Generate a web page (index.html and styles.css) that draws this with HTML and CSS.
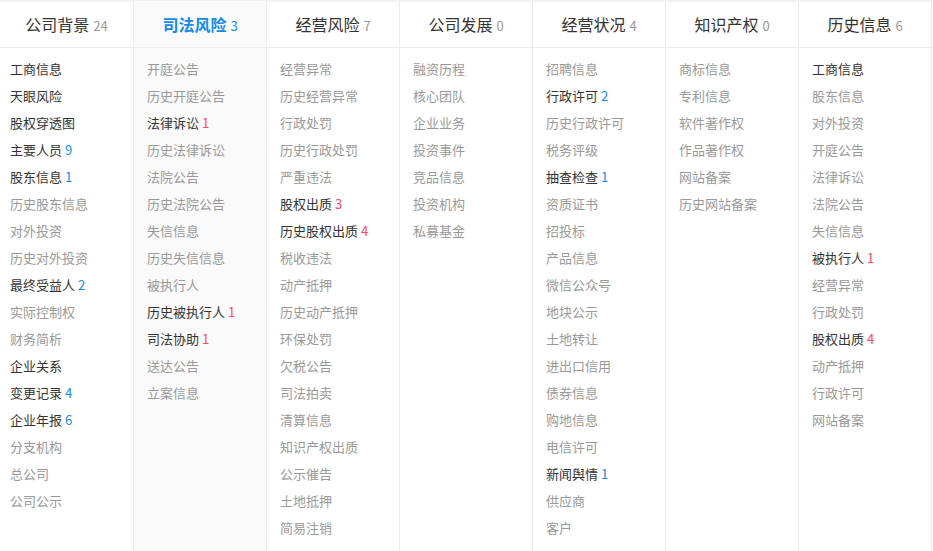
FILE: index.html
```html
<!DOCTYPE html>
<html lang="zh-CN">
<head>
    <meta charset="UTF-8">
    <meta name="viewport" content="width=device-width, initial-scale=1.0">
    <title>企业信息导航</title>
    <link rel="stylesheet" href="styles.css">
</head>
<body>
    <div class="nav-panel">
        <div class="nav-col">
            <div class="nav-head">公司背景<span class="count">24</span></div>
            <ul class="nav-list">
                <li class="on">工商信息</li>
                <li class="on">天眼风险</li>
                <li class="on">股权穿透图</li>
                <li class="on">主要人员<span class="num">9</span></li>
                <li class="on">股东信息<span class="num">1</span></li>
                <li>历史股东信息</li>
                <li>对外投资</li>
                <li>历史对外投资</li>
                <li class="on">最终受益人<span class="num">2</span></li>
                <li>实际控制权</li>
                <li>财务简析</li>
                <li class="on">企业关系</li>
                <li class="on">变更记录<span class="num">4</span></li>
                <li class="on">企业年报<span class="num">6</span></li>
                <li>分支机构</li>
                <li>总公司</li>
                <li>公司公示</li>
            </ul>
        </div>
        <div class="nav-col active">
            <div class="nav-head">司法风险<span class="count">3</span></div>
            <ul class="nav-list">
                <li>开庭公告</li>
                <li>历史开庭公告</li>
                <li class="on">法律诉讼<span class="num risk">1</span></li>
                <li>历史法律诉讼</li>
                <li>法院公告</li>
                <li>历史法院公告</li>
                <li>失信信息</li>
                <li>历史失信信息</li>
                <li>被执行人</li>
                <li class="on">历史被执行人<span class="num risk">1</span></li>
                <li class="on">司法协助<span class="num risk">1</span></li>
                <li>送达公告</li>
                <li>立案信息</li>
            </ul>
        </div>
        <div class="nav-col">
            <div class="nav-head">经营风险<span class="count">7</span></div>
            <ul class="nav-list">
                <li>经营异常</li>
                <li>历史经营异常</li>
                <li>行政处罚</li>
                <li>历史行政处罚</li>
                <li>严重违法</li>
                <li class="on">股权出质<span class="num risk">3</span></li>
                <li class="on">历史股权出质<span class="num risk">4</span></li>
                <li>税收违法</li>
                <li>动产抵押</li>
                <li>历史动产抵押</li>
                <li>环保处罚</li>
                <li>欠税公告</li>
                <li>司法拍卖</li>
                <li>清算信息</li>
                <li>知识产权出质</li>
                <li>公示催告</li>
                <li>土地抵押</li>
                <li>简易注销</li>
            </ul>
        </div>
        <div class="nav-col">
            <div class="nav-head">公司发展<span class="count">0</span></div>
            <ul class="nav-list">
                <li>融资历程</li>
                <li>核心团队</li>
                <li>企业业务</li>
                <li>投资事件</li>
                <li>竞品信息</li>
                <li>投资机构</li>
                <li>私募基金</li>
            </ul>
        </div>
        <div class="nav-col">
            <div class="nav-head">经营状况<span class="count">4</span></div>
            <ul class="nav-list">
                <li>招聘信息</li>
                <li class="on">行政许可<span class="num">2</span></li>
                <li>历史行政许可</li>
                <li>税务评级</li>
                <li class="on">抽查检查<span class="num">1</span></li>
                <li>资质证书</li>
                <li>招投标</li>
                <li>产品信息</li>
                <li>微信公众号</li>
                <li>地块公示</li>
                <li>土地转让</li>
                <li>进出口信用</li>
                <li>债券信息</li>
                <li>购地信息</li>
                <li>电信许可</li>
                <li class="on">新闻舆情<span class="num">1</span></li>
                <li>供应商</li>
                <li>客户</li>
            </ul>
        </div>
        <div class="nav-col">
            <div class="nav-head">知识产权<span class="count">0</span></div>
            <ul class="nav-list">
                <li>商标信息</li>
                <li>专利信息</li>
                <li>软件著作权</li>
                <li>作品著作权</li>
                <li>网站备案</li>
                <li>历史网站备案</li>
            </ul>
        </div>
        <div class="nav-col">
            <div class="nav-head">历史信息<span class="count">6</span></div>
            <ul class="nav-list">
                <li class="on">工商信息</li>
                <li>股东信息</li>
                <li>对外投资</li>
                <li>开庭公告</li>
                <li>法律诉讼</li>
                <li>法院公告</li>
                <li>失信信息</li>
                <li class="on">被执行人<span class="num risk">1</span></li>
                <li>经营异常</li>
                <li>行政处罚</li>
                <li class="on">股权出质<span class="num risk">4</span></li>
                <li>动产抵押</li>
                <li>行政许可</li>
                <li>网站备案</li>
            </ul>
        </div>
    </div>
</body>
</html>
```
FILE: styles.css
```css
* {
    padding: 0;
    margin: 0;
    box-sizing: border-box;
}

body {
    font-family: "Noto Sans CJK SC", "Noto Sans", sans-serif;
    background: #fff;
    color: #333;
}

.nav-panel {
    display: flex;
    height: 551px;
    border-top: 1px solid #f0f0f0;
    box-shadow: inset 0 3px 3px -2px rgba(0, 0, 0, .06);
}

.nav-col {
    width: 133px;
    border-left: 1px solid #ececec;
}

.nav-col:first-child {
    border-left: none;
}

.nav-col:last-child {
    width: 134px;
    border-right: 1px solid #ececec;
}

.nav-col.active {
    background: #fafafa;
}

.nav-head {
    height: 47px;
    line-height: 47px;
    text-align: center;
    font-size: 16px;
    color: #333;
    border-bottom: 1px solid #ececec;
}

.nav-head .count {
    font-size: 13px;
    color: #999;
    margin-left: 4px;
}

.nav-col.active .nav-head {
    color: #128bed;
    font-weight: bold;
}

.nav-col.active .nav-head .count {
    color: #128bed;
    font-weight: normal;
}

.nav-list {
    list-style: none;
    padding: 7px 0 0 13px;
}

.nav-col:first-child .nav-list {
    padding-left: 10px;
}

.nav-list li {
    height: 27px;
    line-height: 27px;
    font-size: 13px;
    color: #999;
    white-space: nowrap;
}

.nav-list li.on {
    color: #333;
}

.nav-list .num {
    color: #128bed;
    margin-left: 3px;
}

.nav-list .num.risk {
    color: #fd485e;
}
```
